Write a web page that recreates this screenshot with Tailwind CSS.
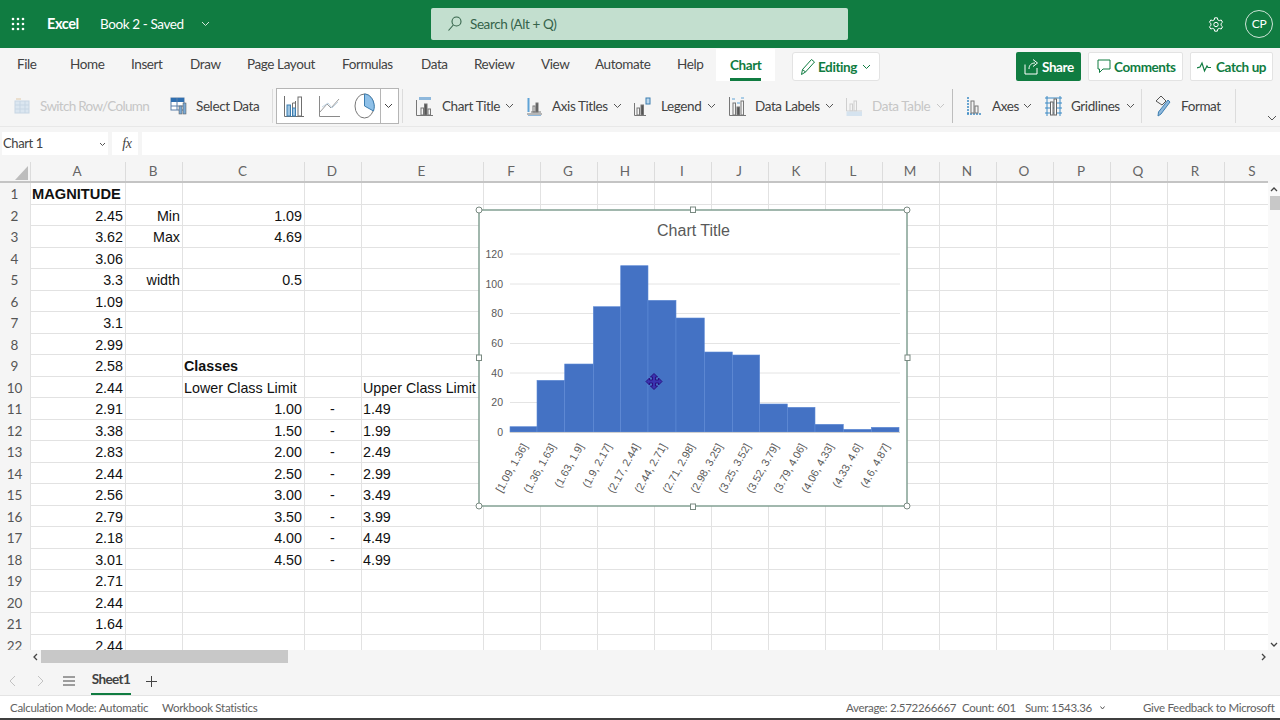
<!DOCTYPE html>
<html lang="en">
<head>
<meta charset="utf-8">
<title>Excel</title>
<script src="https://cdn.jsdelivr.net/npm/@tailwindcss/browser@4"></script>
</head>
<body class="relative w-[1280px] h-[720px] overflow-hidden bg-[#f5f5f5] font-['Lato',sans-serif] tracking-[-0.4px] text-[#424242] flex flex-col">

<!-- Title bar -->
<header class="h-[48px] shrink-0 bg-[#107c41] text-white flex items-center">
  <svg class="ml-[11px] w-[14px] h-[14px]" viewBox="0 0 14 14" fill="#fff"><circle cx="2" cy="2" r="1.300"/><circle cx="7" cy="2" r="1.300"/><circle cx="12" cy="2" r="1.300"/><circle cx="2" cy="7" r="1.300"/><circle cx="7" cy="7" r="1.300"/><circle cx="12" cy="7" r="1.300"/><circle cx="2" cy="12" r="1.300"/><circle cx="7" cy="12" r="1.300"/><circle cx="12" cy="12" r="1.300"/></svg>
  <div class="ml-[22px] w-[33px] text-[14.500px] font-bold whitespace-nowrap">Excel</div>
  <div class="ml-[20px] w-[87px] text-[13.500px] whitespace-nowrap">Book 2 - Saved</div>
  <svg class="ml-[14px] w-[9px] h-[6px]" viewBox="0 0 9 6" fill="none" stroke="#d5e8dc"><path d="M1 1l3.500 3.500L8 1"/></svg>
  <div class="ml-[221px] w-[417px] h-[32px] rounded-[2px] bg-[#c3dfcf] flex items-center text-[#35634a]">
    <svg class="ml-[16px] w-[15px] h-[16px]" viewBox="0 0 15 16" fill="none" stroke="#35634a" stroke-width="1.100"><circle cx="9.500" cy="5.500" r="4.500"/><path d="M6.300 9L1.500 14.500"/></svg>
    <span class="ml-[8px] text-[13.500px] whitespace-nowrap">Search (Alt + Q)</span>
  </div>
  <svg class="ml-[360px] w-[16px] h-[17px]" viewBox="0 0 24 24" fill="none" stroke="#fff" stroke-width="1.500" stroke-linejoin="round"><circle cx="12" cy="12" r="3.300"/><path d="M10 2h4l.6 3 2.400 1.200 2.800-1 2 3.400-2.200 2v2.800l2.200 2-2 3.400-2.800-1L14.600 19 14 22h-4l-.6-3-2.400-1.200-2.800 1-2-3.400 2.200-2v-2.800l-2.200-2 2-3.400 2.800 1L9.400 5z"/></svg>
  <div class="ml-[21px] w-[28px] h-[28px] rounded-full border border-[#cfe5d8] flex items-center justify-center text-[12px]">CP</div>
</header>

<!-- Ribbon tabs -->
<nav class="h-[37px] shrink-0 flex items-start text-[13.500px] text-[#424242] whitespace-nowrap">
  <div class="ml-[17px] w-[18px] h-[32px] leading-[33px]">File</div>
  <div class="ml-[35px] w-[33px] h-[32px] leading-[33px]">Home</div>
  <div class="ml-[28px] w-[31px] h-[32px] leading-[33px]">Insert</div>
  <div class="ml-[28px] w-[29px] h-[32px] leading-[33px]">Draw</div>
  <div class="ml-[28px] w-[67px] h-[32px] leading-[33px]">Page Layout</div>
  <div class="ml-[28px] w-[51px] h-[32px] leading-[33px]">Formulas</div>
  <div class="ml-[28px] w-[25px] h-[32px] leading-[33px]">Data</div>
  <div class="ml-[28px] w-[39px] h-[32px] leading-[33px]">Review</div>
  <div class="ml-[28px] w-[26px] h-[32px] leading-[33px]">View</div>
  <div class="ml-[28px] w-[54px] h-[32px] leading-[33px]">Automate</div>
  <div class="ml-[28px] w-[26px] h-[32px] leading-[33px]">Help</div>
  <div class="ml-[13px] w-[59px] h-[32px] mt-px bg-white px-[14px] font-bold text-[#107c41] leading-[32px] relative">Chart<div class="absolute left-[14px] right-[14px] bottom-0 h-[3px] bg-[#107c41]"></div></div>
  <div class="ml-[17px] mt-[4px] w-[88px] h-[29px] bg-white rounded-[3px] border border-[#e3e3e3] flex items-center text-[#107c41] font-bold">
    <svg class="ml-[7px] w-[16px] h-[18px]" viewBox="0 0 16 18" fill="none" stroke="#107c41"><path d="M1.500 16.500l1-5L11.500 1.500l3 2.500-9 10z"/><path d="M2.500 11.500l3 2.500"/></svg>
    <span class="ml-[2px] pt-[2px]">Editing</span>
    <svg class="ml-[5px] w-[9px] h-[6px]" viewBox="0 0 9 6" fill="none" stroke="#107c41"><path d="M1 1l3.500 3.500L8 1"/></svg>
  </div>
  <div class="ml-[136px] mt-[4px] w-[65px] h-[29px] bg-[#107c41] rounded-[2px] text-white font-bold flex items-center">
    <svg class="ml-[8px] w-[15px] h-[17px]" viewBox="0 0 15 17" fill="none" stroke="#fff"><path d="M1 6.500v9.500h12v-6"/><path d="M5 11c0-4 2.500-6 6-6M9 1.500L13.500 5 9 8.500"/></svg>
    <span class="ml-[3px] pt-[2px]">Share</span>
  </div>
  <div class="ml-[7px] mt-[4px] w-[95px] h-[29px] bg-white rounded-[2px] border border-[#e3e3e3] text-[#107c41] font-bold flex items-center">
    <svg class="ml-[8px] w-[14px] h-[15px]" viewBox="0 0 14 15" fill="none" stroke="#107c41"><path d="M1 1h12v9H6l-3.500 3.500V10H1z"/></svg>
    <span class="ml-[3px] pt-[2px]">Comments</span>
  </div>
  <div class="ml-[7px] mt-[4px] w-[83px] h-[29px] bg-white rounded-[2px] border border-[#e3e3e3] text-[#107c41] font-bold flex items-center">
    <svg class="ml-[6px] w-[14px] h-[12px]" viewBox="0 0 14 12" fill="none" stroke="#107c41" stroke-width="1.200"><path d="M0 7l3-1 2-4 2.500 8L10 5l1 1.500h3"/></svg>
    <span class="ml-[5px] pt-[2px]">Catch up</span>
  </div>
</nav>

<!-- Ribbon commands -->
<section class="h-[42px] shrink-0 flex items-center pt-px text-[13.500px] whitespace-nowrap border-b border-[#e8e8e8] relative">
  <svg class="ml-[14px] w-[16px] h-[18px]" viewBox="0 0 16 18" fill="none" stroke="#c7d6e4"><rect x="1" y="4" width="14" height="12" fill="#dbe6f0"/><path d="M1 8h14M1 12h14M6 4v12M11 4v12"/><path d="M2 2h5" stroke="#e0c9a8"/></svg>
  <span class="ml-[10px] w-[110px] tracking-[-0.7px] text-[#c6c6c6]">Switch Row/Column</span>
  <svg class="ml-[20px] w-[17px] h-[18px]" viewBox="0 0 17 18" fill="none"><rect x="1" y="1" width="13" height="12" fill="#fff" stroke="#5a7ea8"/><path d="M1 1h13v4H1z" fill="#2f6fb0"/><path d="M1 9h13M7 1v12" stroke="#5a7ea8"/><rect x="9" y="9" width="3" height="8" fill="#7aa9d4" stroke="#555" stroke-width=".5"/><rect x="13" y="6" width="3" height="11" fill="#7aa9d4" stroke="#555" stroke-width=".5"/></svg>
  <span class="ml-[9px] w-[62px]">Select Data</span>
  <div class="ml-[14px] w-px h-[34px] bg-[#dcdcdc]"></div>
  <div class="ml-[3px] w-[123px] h-[36px] bg-white border border-[#b5b5b5] flex items-center">
    <svg class="ml-[7px] w-[20px] h-[22px]" viewBox="0 0 20 22" fill="none" stroke="#6f6f6f"><path d="M.500 1v20.500H20"/><rect x="3" y="10" width="3.500" height="11" fill="#9fc5e2" stroke="#3d7eb0"/><rect x="8.500" y="13" width="3" height="8" fill="#9fc5e2" stroke="#3d7eb0"/><rect x="14" y="2" width="3.500" height="19" fill="#fff"/><path d="M8.500 8v5M11.500 6v7M8.500 8h3"/></svg>
    <svg class="ml-[15px] w-[21px] h-[22px]" viewBox="0 0 21 22" fill="none" stroke="#8a8a8a"><path d="M.500 1v20.500H21"/><path d="M1 17l7-8 4 4 8-9" stroke="#9a9a9a"/><path d="M3 12l6-4 4 5 6-6" stroke="#c2d5e4"/></svg>
    <svg class="ml-[14px] w-[21px] h-[26px]" viewBox="0 0 21 26" fill="none" stroke="#777"><ellipse cx="10.500" cy="13" rx="9.500" ry="12" fill="#fff"/><path d="M10.500 1v12l9 5c1-3 1-6 0-9C18 4 14 1 10.500 1z" fill="#8ec0e8" stroke="#3d7eb0"/></svg>
    <div class="ml-[5px] w-[16px] h-full border-l border-[#b5b5b5] flex items-center justify-center">
      <svg class="w-[9px] h-[6px]" viewBox="0 0 9 6" fill="none" stroke="#444"><path d="M1 1l3.500 3.500L8 1"/></svg>
    </div>
  </div>
  <div class="ml-[3px] w-px h-[34px] bg-[#dcdcdc]"></div>

  <svg class="ml-[13px] w-[17px] h-[20px]" viewBox="0 0 17 20" fill="none" stroke="#777"><rect x="3" y="1" width="12" height="3" fill="#8eb8dc" stroke="none"/><path d="M.500 4v15.500H17"/><rect x="5" y="12" width="2.500" height="7"/><rect x="8.500" y="8" width="2.500" height="11" fill="#555"/><rect x="12" y="13" width="2.500" height="6"/></svg>
  <span class="ml-[9px] w-[57px]">Chart Title</span>
  <svg class="ml-[6px] w-[9px] h-[6px]" viewBox="0 0 9 6" fill="none" stroke="#555"><path d="M1 1l3.500 3.500L8 1"/></svg>
  <svg class="ml-[12px] w-[16px] h-[19px]" viewBox="0 0 16 19" fill="none" stroke="#777"><path d="M2.500 1v14" stroke="#5fa3d6" stroke-width="2"/><path d="M1 17h15M5 15h10"/><rect x="7" y="9" width="2" height="6"/><rect x="10" y="6" width="2" height="9" fill="#555"/><path d="M2 18.500h13" stroke="#8eb8dc"/></svg>
  <span class="ml-[10px] w-[55px]">Axis Titles</span>
  <svg class="ml-[6px] w-[9px] h-[6px]" viewBox="0 0 9 6" fill="none" stroke="#555"><path d="M1 1l3.500 3.500L8 1"/></svg>
  <svg class="ml-[12px] w-[17px] h-[19px]" viewBox="0 0 17 19" fill="none" stroke="#777"><path d="M.500 6v12.500H12"/><rect x="3" y="11" width="2.500" height="7"/><rect x="7" y="8" width="2.500" height="10" fill="#555"/><rect x="12" y="1" width="4" height="6" fill="#bcd8ee" stroke="#3d7eb0"/></svg>
  <span class="ml-[10px] w-[40px]">Legend</span>
  <svg class="ml-[6px] w-[9px] h-[6px]" viewBox="0 0 9 6" fill="none" stroke="#555"><path d="M1 1l3.500 3.500L8 1"/></svg>
  <svg class="ml-[13px] w-[17px] h-[20px]" viewBox="0 0 17 20" fill="none" stroke="#777"><path d="M.500 1v18.500H17"/><rect x="4" y="7" width="2.500" height="12"/><rect x="8" y="11" width="2.500" height="8" fill="#555"/><rect x="12" y="5" width="2.500" height="14"/><path d="M3 3h3M8 7h3M12 2h3" stroke="#5fa3d6"/></svg>
  <span class="ml-[9px] w-[64px]">Data Labels</span>
  <svg class="ml-[6px] w-[9px] h-[6px]" viewBox="0 0 9 6" fill="none" stroke="#555"><path d="M1 1l3.500 3.500L8 1"/></svg>
  <svg class="ml-[12px] w-[16px] h-[19px]" viewBox="0 0 16 19" fill="none" stroke="#cfcfcf"><path d="M.500 1v13H16"/><rect x="4" y="7" width="2.500" height="7"/><rect x="8" y="4" width="2.500" height="10"/><rect x="1" y="15" width="15" height="3.500" fill="#d5e3ef" stroke="#d5e3ef"/></svg>
  <span class="ml-[10px] w-[58px] text-[#c6c6c6]">Data Table</span>
  <svg class="ml-[6px] w-[9px] h-[6px]" viewBox="0 0 9 6" fill="none" stroke="#c6c6c6"><path d="M1 1l3.500 3.500L8 1"/></svg>
  <div class="ml-[7px] w-px h-[34px] bg-[#bdbdbd]"></div>

  <svg class="ml-[13px] w-[16px] h-[20px]" viewBox="0 0 16 20" fill="none" stroke="#777"><path d="M2 1v17" stroke="#3d8ac4" stroke-width="1.500" stroke-dasharray="2 1"/><path d="M1 18h15" stroke="#3d8ac4" stroke-width="1.500" stroke-dasharray="2 1"/><rect x="5" y="5" width="3" height="12"/><rect x="9" y="10" width="3" height="7"/></svg>
  <span class="ml-[10px] w-[26px]">Axes</span>
  <svg class="ml-[5px] w-[9px] h-[6px]" viewBox="0 0 9 6" fill="none" stroke="#555"><path d="M1 1l3.500 3.500L8 1"/></svg>
  <svg class="ml-[13px] w-[17px] h-[20px]" viewBox="0 0 17 20" fill="none" stroke="#3d8ac4"><path d="M0 2h17M0 7h17M0 12h17M0 17h17M2 0v20M15 0v20"/><rect x="5.500" y="6" width="2.500" height="13" stroke="#666" fill="#fff"/><rect x="9" y="3" width="2.500" height="16" stroke="#666" fill="#fff"/></svg>
  <span class="ml-[9px] w-[49px]">Gridlines</span>
  <svg class="ml-[6px] w-[9px] h-[6px]" viewBox="0 0 9 6" fill="none" stroke="#555"><path d="M1 1l3.500 3.500L8 1"/></svg>
  <div class="ml-[6px] w-px h-[34px] bg-[#dcdcdc]"></div>

  <svg class="ml-[13px] w-[17px] h-[22px]" viewBox="0 0 17 22" fill="none" stroke="#555"><path d="M1 6l5-5 5 5-4 4z"/><path d="M15 7L6 19l-3 2 .5-4L13 5z" fill="#8eb8dc" stroke="#3d7eb0"/></svg>
  <span class="ml-[9px] w-[40px]">Format</span>
  <div class="ml-[14px] w-px h-[34px] bg-[#dcdcdc]"></div>
  <svg class="absolute left-[1267px] top-[30px] w-[10px] h-[6px]" viewBox="0 0 10 6" fill="none" stroke="#555"><path d="M1 1l4 4 4-4"/></svg>
</section>

<!-- Formula bar -->
<section class="h-[28px] shrink-0 pt-[5px] flex items-start text-[13px]">
  <div class="ml-[2px] w-[106px] h-[23px] bg-white flex items-center justify-between pl-px pr-[2px] pt-px">
    <span>Chart 1</span>
    <svg class="w-[7px] h-[5px]" viewBox="0 0 7 5" fill="none" stroke="#555"><path d="M1 1l2.500 2.500L6 1"/></svg>
  </div>
  <div class="ml-[4px] w-[26px] h-[23px] bg-white flex items-center justify-center pl-[4px] font-['Liberation_Serif',serif] italic text-[14px]">fx</div>
  <div class="ml-[4px] flex-1 h-[23px] bg-white"></div>
</section>

<!-- Column headers -->
<div class="h-[28px] shrink-0 w-[1268px] overflow-hidden grid grid-cols-[31px_95px_57px_122px_57px_122px_repeat(14,57px)] text-[13.500px] tracking-normal text-[#666] text-center border-b-2 border-[#c4c4c4] [&>div]:border-r [&>div]:border-[#dcdcdc] [&>div]:mt-[7px] [&>div]:h-[19px] [&>div]:leading-[19px] [&>div]:pr-[2px]">
  <div class="relative"><svg class="absolute left-[15px] top-[4px] w-[13px] h-[14px]" viewBox="0 0 13 14" fill="#bdbdbd"><path d="M13 0v14H0z"/></svg></div>
  <div>A</div><div>B</div><div>C</div><div>D</div><div>E</div><div>F</div><div>G</div><div>H</div><div>I</div><div>J</div><div>K</div><div>L</div><div>M</div><div>N</div><div>O</div><div>P</div><div>Q</div><div>R</div><div>S</div>
</div>

<!-- Sheet -->
<div class="h-[467px] shrink-0 flex overflow-hidden">
  <div class="w-[1268px] h-full overflow-hidden bg-white grid grid-cols-[31px_95px_57px_122px_57px_122px_1fr] auto-rows-[21.500px] font-['Liberation_Sans',sans-serif] tracking-normal text-[14.300px] leading-[23px] text-[#111] whitespace-nowrap [&>div]:border-b [&>div]:border-r [&>div]:border-[#e2e2e2] [&>div]:pl-[1px] [&>div]:pr-[2px] [&>div:nth-child(7n+1)]:bg-[#f5f5f5] [&>div:nth-child(7n+1)]:text-center [&>div:nth-child(7n+1)]:font-['Lato'] [&>div:nth-child(7n+1)]:text-[13.500px] [&>div:nth-child(7n+1)]:text-[#555] [&>div:nth-child(7n+1)]:border-b-0 [&>div:nth-child(7n+2)]:text-right [&>div:nth-child(7n+3)]:text-right [&>div:nth-child(7n+4)]:text-right [&>div:nth-child(7n+5)]:text-center [&>div:nth-child(7n)]:border-r-0 [&>div:nth-child(7n)]:bg-[repeating-linear-gradient(90deg,transparent_0,transparent_56px,#e2e2e2_56px,#e2e2e2_57px)]">
    <div>1</div><div><span class="block text-left font-bold text-[14.670px]">MAGNITUDE</span></div><div></div><div></div><div></div><div></div><div></div>
    <div>2</div><div>2.45</div><div>Min</div><div>1.09</div><div></div><div></div><div></div>
    <div>3</div><div>3.62</div><div>Max</div><div>4.69</div><div></div><div></div><div></div>
    <div>4</div><div>3.06</div><div></div><div></div><div></div><div></div><div></div>
    <div>5</div><div>3.3</div><div>width</div><div>0.5</div><div></div><div></div><div></div>
    <div>6</div><div>1.09</div><div></div><div></div><div></div><div></div><div></div>
    <div>7</div><div>3.1</div><div></div><div></div><div></div><div></div><div></div>
    <div>8</div><div>2.99</div><div></div><div></div><div></div><div></div><div></div>
    <div>9</div><div>2.58</div><div></div><div><span class="block text-left font-bold">Classes</span></div><div></div><div></div><div></div>
    <div>10</div><div>2.44</div><div></div><div><span class="block text-left">Lower Class Limit</span></div><div></div><div>Upper Class Limit</div><div></div>
    <div>11</div><div>2.91</div><div></div><div>1.00</div><div>-</div><div>1.49</div><div></div>
    <div>12</div><div>3.38</div><div></div><div>1.50</div><div>-</div><div>1.99</div><div></div>
    <div>13</div><div>2.83</div><div></div><div>2.00</div><div>-</div><div>2.49</div><div></div>
    <div>14</div><div>2.44</div><div></div><div>2.50</div><div>-</div><div>2.99</div><div></div>
    <div>15</div><div>2.56</div><div></div><div>3.00</div><div>-</div><div>3.49</div><div></div>
    <div>16</div><div>2.79</div><div></div><div>3.50</div><div>-</div><div>3.99</div><div></div>
    <div>17</div><div>2.18</div><div></div><div>4.00</div><div>-</div><div>4.49</div><div></div>
    <div>18</div><div>3.01</div><div></div><div>4.50</div><div>-</div><div>4.99</div><div></div>
    <div>19</div><div>2.71</div><div></div><div></div><div></div><div></div><div></div>
    <div>20</div><div>2.44</div><div></div><div></div><div></div><div></div><div></div>
    <div>21</div><div>1.64</div><div></div><div></div><div></div><div></div><div></div>
    <div>22</div><div>2.44</div><div></div><div></div><div></div><div></div><div></div>
  </div>
  <div class="w-[12px] h-full bg-[#f9f9f9] relative flex flex-col items-end">
    <svg class="mt-[4px] mr-[2px] w-[8px] h-[5px]" viewBox="0 0 8 5" fill="none" stroke="#444" stroke-width="1.300"><path d="M1 4l3-3 3 3"/></svg>
    <div class="mt-[4px] w-[10px] h-[14px] bg-[#c8c8c8]"></div>
    <svg class="mt-auto mb-[3px] mr-[2px] w-[8px] h-[5px]" viewBox="0 0 8 5" fill="none" stroke="#444" stroke-width="1.300"><path d="M1 1l3 3 3-3"/></svg>
  </div>
</div>

<!-- Horizontal scrollbar -->
<div class="h-[17px] shrink-0 flex items-start">
  <svg class="ml-[32px] mt-[3px] w-[6px] h-[8px]" viewBox="0 0 6 8" fill="none" stroke="#444" stroke-width="1.300"><path d="M5 1L2 4l3 3"/></svg>
  <div class="ml-[3px] w-[247px] h-[13px] bg-[#c8c8c8]"></div>
  <svg class="ml-[973px] mt-[3px] w-[6px] h-[8px]" viewBox="0 0 6 8" fill="none" stroke="#444" stroke-width="1.300"><path d="M1 1l3 3-3 3"/></svg>
</div>

<!-- Sheet tabs -->
<div class="h-[29px] shrink-0 flex items-center border-b border-[#e4e4e4]">
  <svg class="ml-[8px] w-[8px] h-[12px]" viewBox="0 0 8 12" fill="none" stroke="#c2c2c2"><path d="M7 1L2 6l5 5"/></svg>
  <svg class="ml-[21px] w-[8px] h-[12px]" viewBox="0 0 8 12" fill="none" stroke="#c2c2c2"><path d="M1 1l5 5-5 5"/></svg>
  <svg class="ml-[18px] w-[12px] h-[10px]" viewBox="0 0 12 10" fill="none" stroke="#444"><path d="M0 1h12M0 5h12M0 9h12"/></svg>
  <div class="ml-[16px] w-[40px] h-full text-center text-[13.500px] tracking-[-0.6px] font-bold text-[#424242] leading-[25px] border-b-[2px] border-[#107c41]">Sheet1</div>
  <svg class="ml-[15px] w-[11px] h-[11px]" viewBox="0 0 11 11" fill="none" stroke="#444"><path d="M5.500 0v11M0 5.500h11"/></svg>
</div>

<!-- Status bar -->
<footer class="h-[22px] shrink-0 bg-white flex items-center pt-px text-[11.500px] tracking-[-0.3px] text-[#616161] whitespace-nowrap">
  <span class="ml-[10px] w-[136px]">Calculation Mode: Automatic</span>
  <span class="ml-[16px] w-[93px]">Workbook Statistics</span>
  <span class="ml-[591px] w-[104px]">Average: 2.572266667</span>
  <span class="ml-[12px] w-[50px]">Count: 601</span>
  <span class="ml-[13px] w-[63px]">Sum: 1543.36</span>
  <svg class="ml-[12px] w-[5px] h-[4px]" viewBox="0 0 5 4" fill="none" stroke="#555"><path d="M.500.500L2.500 3l2-2.500"/></svg>
  <span class="ml-[38px] w-[129px]">Give Feedback to Microsoft</span>
</footer>
<div class="h-[2px] shrink-0 bg-[#3f3f3f]"></div>

<!-- Chart object -->
<div class="absolute left-[479px] top-[210px] w-[428px] h-[296px] bg-white">
  <svg class="block overflow-visible w-full h-full font-['Liberation_Sans',sans-serif] tracking-normal" viewBox="479 210 428 296" fill="#595959">
    <text x="693.500" y="236" text-anchor="middle" font-size="16">Chart Title</text>
    <g stroke="#e4e4e4" stroke-width="1">
      <path d="M510 254h390M510 284h390M510 313.500h390M510 343.500h390M510 373h390M510 402.500h390"/>
    </g>
    <g font-size="10.500" text-anchor="end">
      <text x="503" y="258">120</text><text x="503" y="288">100</text><text x="503" y="317">80</text><text x="503" y="347">60</text><text x="503" y="377">40</text><text x="503" y="406">20</text><text x="503" y="436">0</text>
    </g>
    <g fill="#4472c4" stroke="#5f8ad6" stroke-width=".6">
      <rect x="510" y="426.700" width="27" height="5.300"/>
      <rect x="537" y="380.300" width="27.700" height="51.700"/>
      <rect x="564.700" y="364" width="28.600" height="68"/>
      <rect x="593.300" y="306.700" width="27.400" height="125.300"/>
      <rect x="620.700" y="265.700" width="27.300" height="166.300"/>
      <rect x="648" y="300.300" width="28" height="131.700"/>
      <rect x="676" y="318" width="28.300" height="114"/>
      <rect x="704.300" y="352" width="28" height="80"/>
      <rect x="732.300" y="355" width="27.400" height="77"/>
      <rect x="759.700" y="404" width="27.600" height="28"/>
      <rect x="787.300" y="407.300" width="27.700" height="24.700"/>
      <rect x="815" y="424.300" width="28.300" height="7.700"/>
      <rect x="843.300" y="429.300" width="28" height="2.700"/>
      <rect x="871.300" y="427.300" width="27.700" height="4.700"/>
    </g>
    <path d="M510 432.500h390" stroke="#d0d0d0"/>
    <g font-size="10.800" text-anchor="end">
      <text transform="translate(528 446) rotate(-61)">[1.09, 1.36]</text>
      <text transform="translate(556 446) rotate(-61)">(1.36, 1.63]</text>
      <text transform="translate(584 446) rotate(-61)">(1.63, 1.9]</text>
      <text transform="translate(612 446) rotate(-61)">(1.9, 2.17]</text>
      <text transform="translate(640 446) rotate(-61)">(2.17, 2.44]</text>
      <text transform="translate(667 446) rotate(-61)">(2.44, 2.71]</text>
      <text transform="translate(695 446) rotate(-61)">(2.71, 2.98]</text>
      <text transform="translate(723 446) rotate(-61)">(2.98, 3.25]</text>
      <text transform="translate(751 446) rotate(-61)">(3.25, 3.52]</text>
      <text transform="translate(779 446) rotate(-61)">(3.52, 3.79]</text>
      <text transform="translate(806 446) rotate(-61)">(3.79, 4.06]</text>
      <text transform="translate(834 446) rotate(-61)">(4.06, 4.33]</text>
      <text transform="translate(862 446) rotate(-61)">(4.33, 4.6]</text>
      <text transform="translate(890 446) rotate(-61)">(4.6, 4.87]</text>
    </g>
    <rect x="479" y="210" width="428" height="296" fill="none" stroke="#82a093" stroke-width="1.500"/>
    <g fill="#fff" stroke="#7a8a82" stroke-width="1">
      <circle cx="479" cy="210" r="3"/><circle cx="907" cy="210" r="3"/><circle cx="479" cy="506" r="3"/><circle cx="907" cy="506" r="3"/>
      <rect x="690.500" y="207" width="5" height="5.500"/><rect x="690.500" y="504" width="5" height="5.500"/>
      <rect x="476.500" y="355" width="5" height="5.500"/><rect x="905" y="355" width="5" height="5.500"/>
    </g>
    <g transform="translate(654 381.500)" fill="#3a34b0" stroke="#2a0f80" stroke-width="1">
      <path d="M0-8l3.500 3.500H1.500v3h3V-3.500L8 0l-3.500 3.500v-2h-3v3h2L0 8l-3.500-3.500h2v-3h-3v2L-8 0l3.500-3.500v2h3v-3h-2z"/>
    </g>
  </svg>
</div>
</body>
</html>
